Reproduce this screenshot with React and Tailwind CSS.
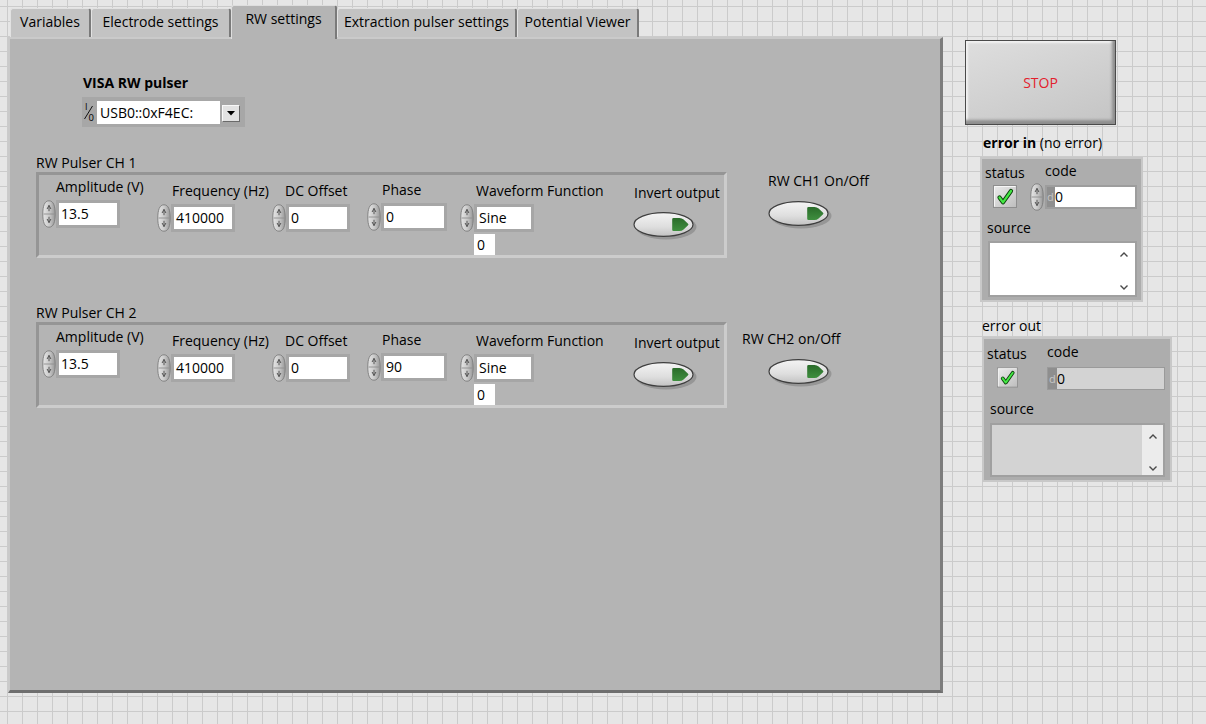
import React from "react";

function Spinner() {
  return (
    <svg width="14" height="28" viewBox="0 0 14 28" className="shrink-0">
      <defs>
        <linearGradient id="spg" x1="0" y1="0" x2="1" y2="0">
          <stop offset="0" stopColor="#e6e6e6" />
          <stop offset="0.5" stopColor="#cbcbcb" />
          <stop offset="1" stopColor="#989898" />
        </linearGradient>
      </defs>
      <path d="M7 0.8 C11.5 0.8 13.2 6 13.2 14 C13.2 22 11.5 27.2 7 27.2 C2.5 27.2 0.8 22 0.8 14 C0.8 6 2.5 0.8 7 0.8 Z" fill="url(#spg)" stroke="#7c7c7c" strokeWidth="0.9" />
      <path d="M1.6 14 H12.4" stroke="#8e8e8e" strokeWidth="0.9" />
      <path d="M5.1 9 L7 5.4 L8.9 9 M7 5.4 V11.2" stroke="#555555" strokeWidth="1" fill="none" />
      <path d="M5.1 19 L7 22.6 L8.9 19 M7 22.6 V16.8" stroke="#555555" strokeWidth="1" fill="none" />
    </svg>
  );
}

function Toggle() {
  return (
    <svg width="66" height="30" viewBox="0 0 66 30" className="shrink-0">
      <defs>
        <linearGradient id="tgg" x1="0" y1="0" x2="0" y2="1">
          <stop offset="0" stopColor="#f4f4f4" />
          <stop offset="0.6" stopColor="#dedede" />
          <stop offset="1" stopColor="#c2c2c2" />
        </linearGradient>
        <linearGradient id="tgr" x1="0" y1="0" x2="0" y2="1">
          <stop offset="0" stopColor="#2a6b2a" />
          <stop offset="1" stopColor="#3f8f3f" />
        </linearGradient>
      </defs>
      <ellipse cx="33" cy="16" rx="30.5" ry="12.5" fill="#7e7e7e" opacity="0.55" />
      <ellipse cx="30.5" cy="13.5" rx="29.5" ry="11.8" fill="url(#tgg)" stroke="#3e3e3e" strokeWidth="1.2" />
      <path d="M40.5 7 L46.5 7 Q48.8 7 50.6 8.6 L54.8 12.4 Q56.2 13.5 54.8 14.6 L50.6 18.4 Q48.8 20 46.5 20 L40.5 20 Q39.2 20 39.2 18.7 L39.2 8.3 Q39.2 7 40.5 7 Z" fill="url(#tgr)" />
    </svg>
  );
}

function Check({ w, h }) {
  return (
    <svg width={w} height={h} viewBox="0 0 24 23" className="shrink-0">
      <defs>
        <linearGradient id="cbg" x1="0" y1="0" x2="1" y2="1">
          <stop offset="0" stopColor="#ececec" />
          <stop offset="1" stopColor="#bdbdbd" />
        </linearGradient>
      </defs>
      <rect x="0.5" y="0.5" width="23" height="22" fill="url(#cbg)" stroke="#8e8e8e" />
      <path d="M1.5 21.5 V1.5 H22.5" stroke="#f6f6f6" fill="none" />
      <path d="M6.5 12.5 L10 17.3 L18 6" stroke="#0c3f0c" strokeWidth="4.2" fill="none" strokeLinecap="round" strokeLinejoin="round" />
      <path d="M6.5 12.5 L10 17.3 L18 6" stroke="#44e844" strokeWidth="2.2" fill="none" strokeLinecap="round" strokeLinejoin="round" />
    </svg>
  );
}

function Chevron({ down }) {
  return (
    <svg width="10" height="7" viewBox="0 0 10 7">
      <polyline points={down ? "1.5,1.5 5,5 8.5,1.5" : "1.5,5.5 5,2 8.5,5.5"} fill="none" stroke="#4a4a4a" strokeWidth="1.4" />
    </svg>
  );
}

function NumControl({ label, value, blockCls, labelCls, whiteCls, extra }) {
  return (
    <div className={`flex flex-col shrink-0 ${blockCls}`}>
      <div className={`whitespace-nowrap ${labelCls}`}>{label}</div>
      <div className="mt-[5px] flex items-center">
        <Spinner />
        <div className="bg-[#a6a6a6] p-[3px]">
          <div className={`bg-white h-[22px] leading-[22px] pl-[2px] ${whiteCls}`}>{value}</div>
        </div>
      </div>
      {extra}
    </div>
  );
}

function Cluster({ phase }) {
  return (
    <div className="w-[691px] h-[86px] shrink-0 border-[3px] border-t-[#959595] border-l-[#959595] border-b-[#cccccc] border-r-[#cccccc] flex items-start pl-[3px]">
      <NumControl label="Amplitude (V)" value="13.5" blockCls="w-[115px] mt-[4px]" labelCls="ml-[14px]" whiteCls="w-[58px]" />
      <NumControl label="Frequency (Hz)" value="410000" blockCls="w-[115px] mt-[8px]" labelCls="ml-[15px]" whiteCls="w-[58px]" />
      <NumControl label="DC Offset" value="0" blockCls="w-[95px] mt-[8px]" labelCls="ml-[13px]" whiteCls="w-[58px]" />
      <NumControl label="Phase" value={phase} blockCls="w-[93px] mt-[7px]" labelCls="ml-[15px]" whiteCls="w-[60px]" />
      <NumControl
        label="Waveform Function"
        value="Sine"
        blockCls="w-[173px] mt-[8px]"
        labelCls="ml-[16px]"
        whiteCls="w-[54px]"
        extra={<div className="ml-[14px] mt-[2px] w-[21px] h-[21px] bg-white leading-[21px] pl-[3px]">0</div>}
      />
      <div className="flex flex-col mt-[10px]">
        <div className="ml-[1px] whitespace-nowrap">Invert output</div>
        <div className="mt-[10px]">
          <Toggle />
        </div>
      </div>
    </div>
  );
}

function Tab({ label, cls, selected }) {
  if (selected) {
    return (
      <div className={`h-[34px] mb-[-2px] bg-[#b4b4b4] border-t border-l border-t-[#dedede] border-l-[#dedede] border-r-2 border-r-[#7a7a7a] rounded-t-[3px] flex justify-center pt-[5px] whitespace-nowrap ${cls}`}>
        {label}
      </div>
    );
  }
  return (
    <div className={`h-[29px] bg-[#c3c3c3] border-t border-l border-t-[#e2e2e2] border-l-[#e2e2e2] border-r-2 border-r-[#7a7a7a] rounded-t-[3px] flex justify-center pt-[5px] whitespace-nowrap ${cls}`}>
      {label}
    </div>
  );
}

export default function App() {
  return (
    <div className="font-['Open_Sans',sans-serif] w-[1206px] h-[724px] overflow-hidden flex items-start text-[14px] leading-[16px] text-black bg-[#e6e6e6] [background-image:linear-gradient(to_right,#cbcbcb_1px,transparent_1px),linear-gradient(to_bottom,#cbcbcb_1px,transparent_1px)] [background-size:15px_15px] [background-position:7px_6px]">
      {/* Tab control */}
      <div className="ml-[8px] mt-[5px] w-[935px] shrink-0 flex flex-col">
        <div className="flex items-end h-[32px] pl-[2px] relative z-10">
          <Tab label="Variables" cls="w-[81px]" />
          <Tab label="Electrode settings" cls="w-[140px]" />
          <Tab label="RW settings" cls="w-[106px]" selected />
          <Tab label="Extraction pulser settings" cls="w-[180px]" />
          <Tab label="Potential Viewer" cls="w-[122px]" />
        </div>
        <div className="h-[656px] bg-[#b4b4b4] border-l-2 border-t-2 border-l-[#cacaca] border-t-[#cacaca] border-r-[3px] border-b-[3px] border-r-[#7c7c7c] border-b-[#6e6e6e] flex flex-col items-start">
          <div className="ml-[73px] mt-[36px] font-bold whitespace-nowrap">VISA RW pulser</div>
          <div className="ml-[72px] mt-[6px] w-[163px] h-[30px] bg-[#a7a7a7] flex items-center">
            <svg width="15" height="24" viewBox="0 0 15 24" className="shrink-0">
              <text x="3" y="9.5" fontSize="9" fontFamily="Open Sans, sans-serif" fill="#000">I</text>
              <line x1="2.5" y1="19" x2="10.5" y2="6" stroke="#000" strokeWidth="0.9" />
              <text x="6.5" y="21" fontSize="9.5" fontFamily="Open Sans, sans-serif" fill="#000">0</text>
            </svg>
            <div className="w-[123px] h-[23px] bg-white leading-[23px] pl-[3px] whitespace-nowrap">USB0::0xF4EC:</div>
            <div className="ml-[2px] mt-[3px] w-[18px] h-[17px] bg-[#e2e2e2] border border-t-[#f8f8f8] border-l-[#f8f8f8] border-b-[#6a6a6a] border-r-[#6a6a6a] flex items-center justify-center">
              <svg width="8" height="5" viewBox="0 0 8 5">
                <polygon points="0,0 8,0 4,4.5" fill="#000" />
              </svg>
            </div>
          </div>

          <div className="ml-[26px] mt-[28px] whitespace-nowrap">RW Pulser CH 1</div>
          <div className="ml-[26px] mt-[1px] flex items-start">
            <Cluster phase="0" />
            <div className="ml-[41px] mt-[1px] flex flex-col">
              <div className="whitespace-nowrap">RW CH1 On/Off</div>
              <div className="mt-[11px]">
                <Toggle />
              </div>
            </div>
          </div>

          <div className="ml-[26px] mt-[47px] whitespace-nowrap">RW Pulser CH 2</div>
          <div className="ml-[26px] mt-[1px] flex items-start">
            <Cluster phase="90" />
            <div className="ml-[15px] mt-[9px] flex flex-col">
              <div className="whitespace-nowrap">RW CH2 on/Off</div>
              <div className="ml-[26px] mt-[11px]">
                <Toggle />
              </div>
            </div>
          </div>
        </div>
      </div>

      {/* Right column */}
      <div className="ml-[22px] mt-[40px] flex flex-col items-start">
        <div className="w-[151px] h-[85px] border border-[#4a4a4a] bg-[linear-gradient(160deg,#dedede,#c4c4c4)] shadow-[inset_-3px_-4px_3px_#8e8e8e,inset_2px_2px_2px_#f2f2f2] flex items-center justify-center text-[#e3202c]">
          STOP
        </div>

        <div className="ml-[18px] mt-[10px] whitespace-nowrap">
          <span className="font-bold">error in</span> (no error)
        </div>
        <div className="ml-[15px] mt-[6px] w-[163px] h-[145px] bg-[#adadad] border-2 border-[#c8c8c8] flex flex-col items-start">
          <div className="flex items-start">
            <div className="ml-[3px] w-[45px] mt-[6px] flex flex-col">
              <div>status</div>
              <div className="ml-[8px] mt-[4px]">
                <Check w={24} h={23} />
              </div>
            </div>
            <div className="mt-[4px] flex flex-col">
              <div className="ml-[15px]">code</div>
              <div className="mt-[4px] flex items-center">
                <Spinner />
                <div className="ml-[1px] bg-[#9d9d9d] p-[2px] flex items-center">
                  <div className="w-[8px] h-[20px] bg-[#8f8f8f] text-[11px] leading-[20px] text-[#c4c4c4]">d</div>
                  <div className="w-[80px] h-[20px] bg-white leading-[20px]">0</div>
                </div>
              </div>
            </div>
          </div>
          <div className="ml-[5px] mt-[9px]">source</div>
          <div className="ml-[6px] mt-[5px] w-[149px] h-[56px] bg-[#a0a0a0] p-[2px]">
            <div className="w-full h-full bg-white flex justify-end">
              <div className="w-[22px] h-full flex flex-col items-center justify-between pt-[8px] pb-[4px]">
                <Chevron />
                <Chevron down />
              </div>
            </div>
          </div>
        </div>

        <div className="ml-[17px] mt-[16px] whitespace-nowrap">error out</div>
        <div className="ml-[17px] mt-[3px] w-[190px] h-[145px] bg-[#adadad] border-2 border-[#c8c8c8] flex flex-col items-start">
          <div className="flex items-start">
            <div className="ml-[3px] w-[60px] mt-[7px] flex flex-col">
              <div>status</div>
              <div className="ml-[10px] mt-[5px]">
                <Check w={21} h={21} />
              </div>
            </div>
            <div className="mt-[5px] flex flex-col">
              <div>code</div>
              <div className="mt-[7px] w-[118px] h-[23px] border border-[#9a9a9a] flex">
                <div className="w-[9px] h-full bg-[#8e8e8e] text-[11px] leading-[21px] text-[#c8c8c8] pl-[1px]">d</div>
                <div className="flex-1 h-full bg-[#d3d3d3] leading-[21px]">0</div>
              </div>
            </div>
          </div>
          <div className="ml-[6px] mt-[11px]">source</div>
          <div className="ml-[6px] mt-[6px] w-[175px] h-[54px] bg-[#a0a0a0] p-[2px]">
            <div className="w-full h-full bg-[#d3d3d3] flex justify-end">
              <div className="w-[21px] h-full bg-[#ececec] flex flex-col items-center justify-between pt-[8px] pb-[3px]">
                <Chevron />
                <Chevron down />
              </div>
            </div>
          </div>
        </div>
      </div>
    </div>
  );
}
